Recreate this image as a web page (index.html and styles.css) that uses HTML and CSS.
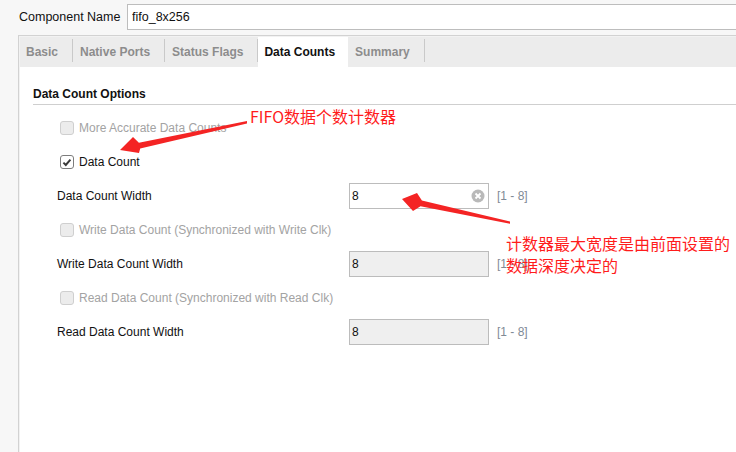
FILE: index.html
```html
<!DOCTYPE html>
<html lang="en">
<head>
    <meta charset="UTF-8">
    <title>FIFO Generator - Data Counts</title>
    <link rel="stylesheet" href="styles.css">
</head>
<body>

<div class="name-row">
    <label>Component Name</label>
    <input class="name-input" type="text" value="fifo_8x256">
</div>

<div class="panel">
    <div class="tabs">
        <div class="tab">Basic</div>
        <div class="tab">Native Ports</div>
        <div class="tab">Status Flags</div>
        <div class="tab active">Data Counts</div>
        <div class="tab">Summary</div>
    </div>

    <div class="content">
        <div class="group-title">Data Count Options</div>

        <div class="options">
            <div class="row check disabled">
                <span class="box"></span>
                <span>More Accurate Data Counts</span>
            </div>
            <div class="row check">
                <span class="box checked">
                    <svg viewBox="0 0 13 13" width="13" height="13"><path d="M2.6 6.6 L5.2 9.2 L10.2 3.4" fill="none" stroke="#3a3a3a" stroke-width="2.1"/></svg>
                </span>
                <span>Data Count</span>
            </div>
            <div class="row field">
                <span class="field-label">Data Count Width</span>
                <span class="field-box">
                    <span class="value">8</span>
                    <span class="clear">
                        <svg viewBox="0 0 14 14" width="14" height="14"><circle cx="7" cy="7" r="6.5" fill="#b9b9b9"/><path d="M4.5 4.5 L9.5 9.5 M9.5 4.5 L4.5 9.5" stroke="#fff" stroke-width="1.8"/></svg>
                    </span>
                </span>
                <span class="range">[1 - 8]</span>
            </div>
            <div class="row check disabled">
                <span class="box"></span>
                <span>Write Data Count (Synchronized with Write Clk)</span>
            </div>
            <div class="row field">
                <span class="field-label">Write Data Count Width</span>
                <span class="field-box off"><span class="value">8</span></span>
                <span class="range">[1 - 8]</span>
            </div>
            <div class="row check disabled">
                <span class="box"></span>
                <span>Read Data Count (Synchronized with Read Clk)</span>
            </div>
            <div class="row field">
                <span class="field-label">Read Data Count Width</span>
                <span class="field-box off"><span class="value">8</span></span>
                <span class="range">[1 - 8]</span>
            </div>
        </div>
    </div>
</div>

<!-- annotations drawn on top of the screenshot -->
<svg class="marks" width="736" height="452" viewBox="0 0 736 452">
    <polygon points="120,150 133,137 138.9,142.8 247,121 247,123.5 140.2,148.6 139,153" />
    <polygon points="402,199 417,193 421.9,200.4 510,221.5 510,223.8 420.5,206.2 413,211" />
</svg>
<div class="note note-1">FIFO数据个数计数器</div>
<div class="note note-2">计数器最大宽度是由前面设置的<br>数据深度决定的</div>

</body>
</html>
```

FILE: styles.css
```css
/* 通用样式 */
body {
    margin: 0;
    padding: 0;
    width: 736px;
    height: 452px;
    overflow: hidden;
    position: relative;
    background-color: #f7f7f7;
    font-family: "Liberation Sans", Arial, sans-serif;
    font-size: 12px;
    color: #111;
}

/* 顶部名称 */
.name-row {
    display: flex;
    align-items: center;
    padding: 4px 0 0 19px;
    height: 26px;
}
.name-row label {
    width: 108px;
    font-size: 12.5px;
}
.name-input {
    flex: 1;
    height: 26px;
    box-sizing: border-box;
    margin-right: -20px;
    border: 1px solid #bdbdbd;
    padding: 0 4px;
    font-family: inherit;
    font-size: 12.5px;
    color: #111;
    background: #fff;
    outline: none;
}

/* 选项卡面板 */
.panel {
    margin: 5px 0 0 18px;
    border-top: 1px solid #d2d2d2;
    border-left: 1px solid #d2d2d2;
    padding: 1px 0 0 1px;
    background: #f2f2f2;
    height: 415px;
    display: flex;
    flex-direction: column;
}
.tabs {
    display: flex;
    height: 30px;
    flex-shrink: 0;
    background: #ececec;
}
.tab {
    display: flex;
    align-items: center;
    padding: 0 15px 0 7px;
    font-weight: bold;
    color: #8c8c8c;
    position: relative;
}
.tab::after {
    content: "";
    position: absolute;
    right: 0;
    top: 2px;
    bottom: 5px;
    width: 1px;
    background: #c9c9c9;
}
.tab:first-child {
    padding-left: 6px;
}
.tab.active {
    background: #fff;
    color: #111;
    padding: 0 13px 0 6px;
}
.tab.active::after {
    display: none;
}
.content {
    background: #fff;
    flex: 1;
    padding: 0 0 0 13px;
}
.group-title {
    font-weight: bold;
    padding-top: 20px;
    line-height: 15px;
    padding-bottom: 2px;
    border-bottom: 1px solid #cfcfcf;
}
.options {
    padding-top: 6px;
}
.row {
    display: flex;
    align-items: center;
    height: 34px;
    padding-left: 24px;
}
.row.check {
    padding-left: 27px;
}
.disabled {
    color: #a3a3a3;
}
.box {
    width: 14px;
    height: 14px;
    box-sizing: border-box;
    border: 1px solid #cfcfcf;
    border-radius: 3px;
    background: #ececec;
    margin-right: 5px;
    display: flex;
}
.box.checked {
    border-color: #7d7d7d;
    background: #fff;
}
.field-label {
    width: 292px;
}
.field-box {
    display: flex;
    align-items: center;
    justify-content: space-between;
    box-sizing: border-box;
    width: 140px;
    height: 26px;
    border: 1px solid #bcbcbc;
    background: #fff;
    padding: 0 3px 0 2px;
}
.field-box.off {
    background: #efefef;
}
.clear {
    display: flex;
}
.range {
    margin-left: 8px;
    color: #808a96;
}

/* 标注 */
.marks {
    position: absolute;
    top: 0;
    left: 0;
}
.marks polygon {
    fill: #f42424;
}
.note {
    position: absolute;
    font-family: "Noto Sans CJK SC", sans-serif;
    font-size: 16px;
    line-height: 22px;
    color: #ff1c1c;
    white-space: nowrap;
}
.note-1 {
    left: 250px;
    top: 105px;
}
.note-2 {
    left: 506px;
    top: 232px;
}
```
